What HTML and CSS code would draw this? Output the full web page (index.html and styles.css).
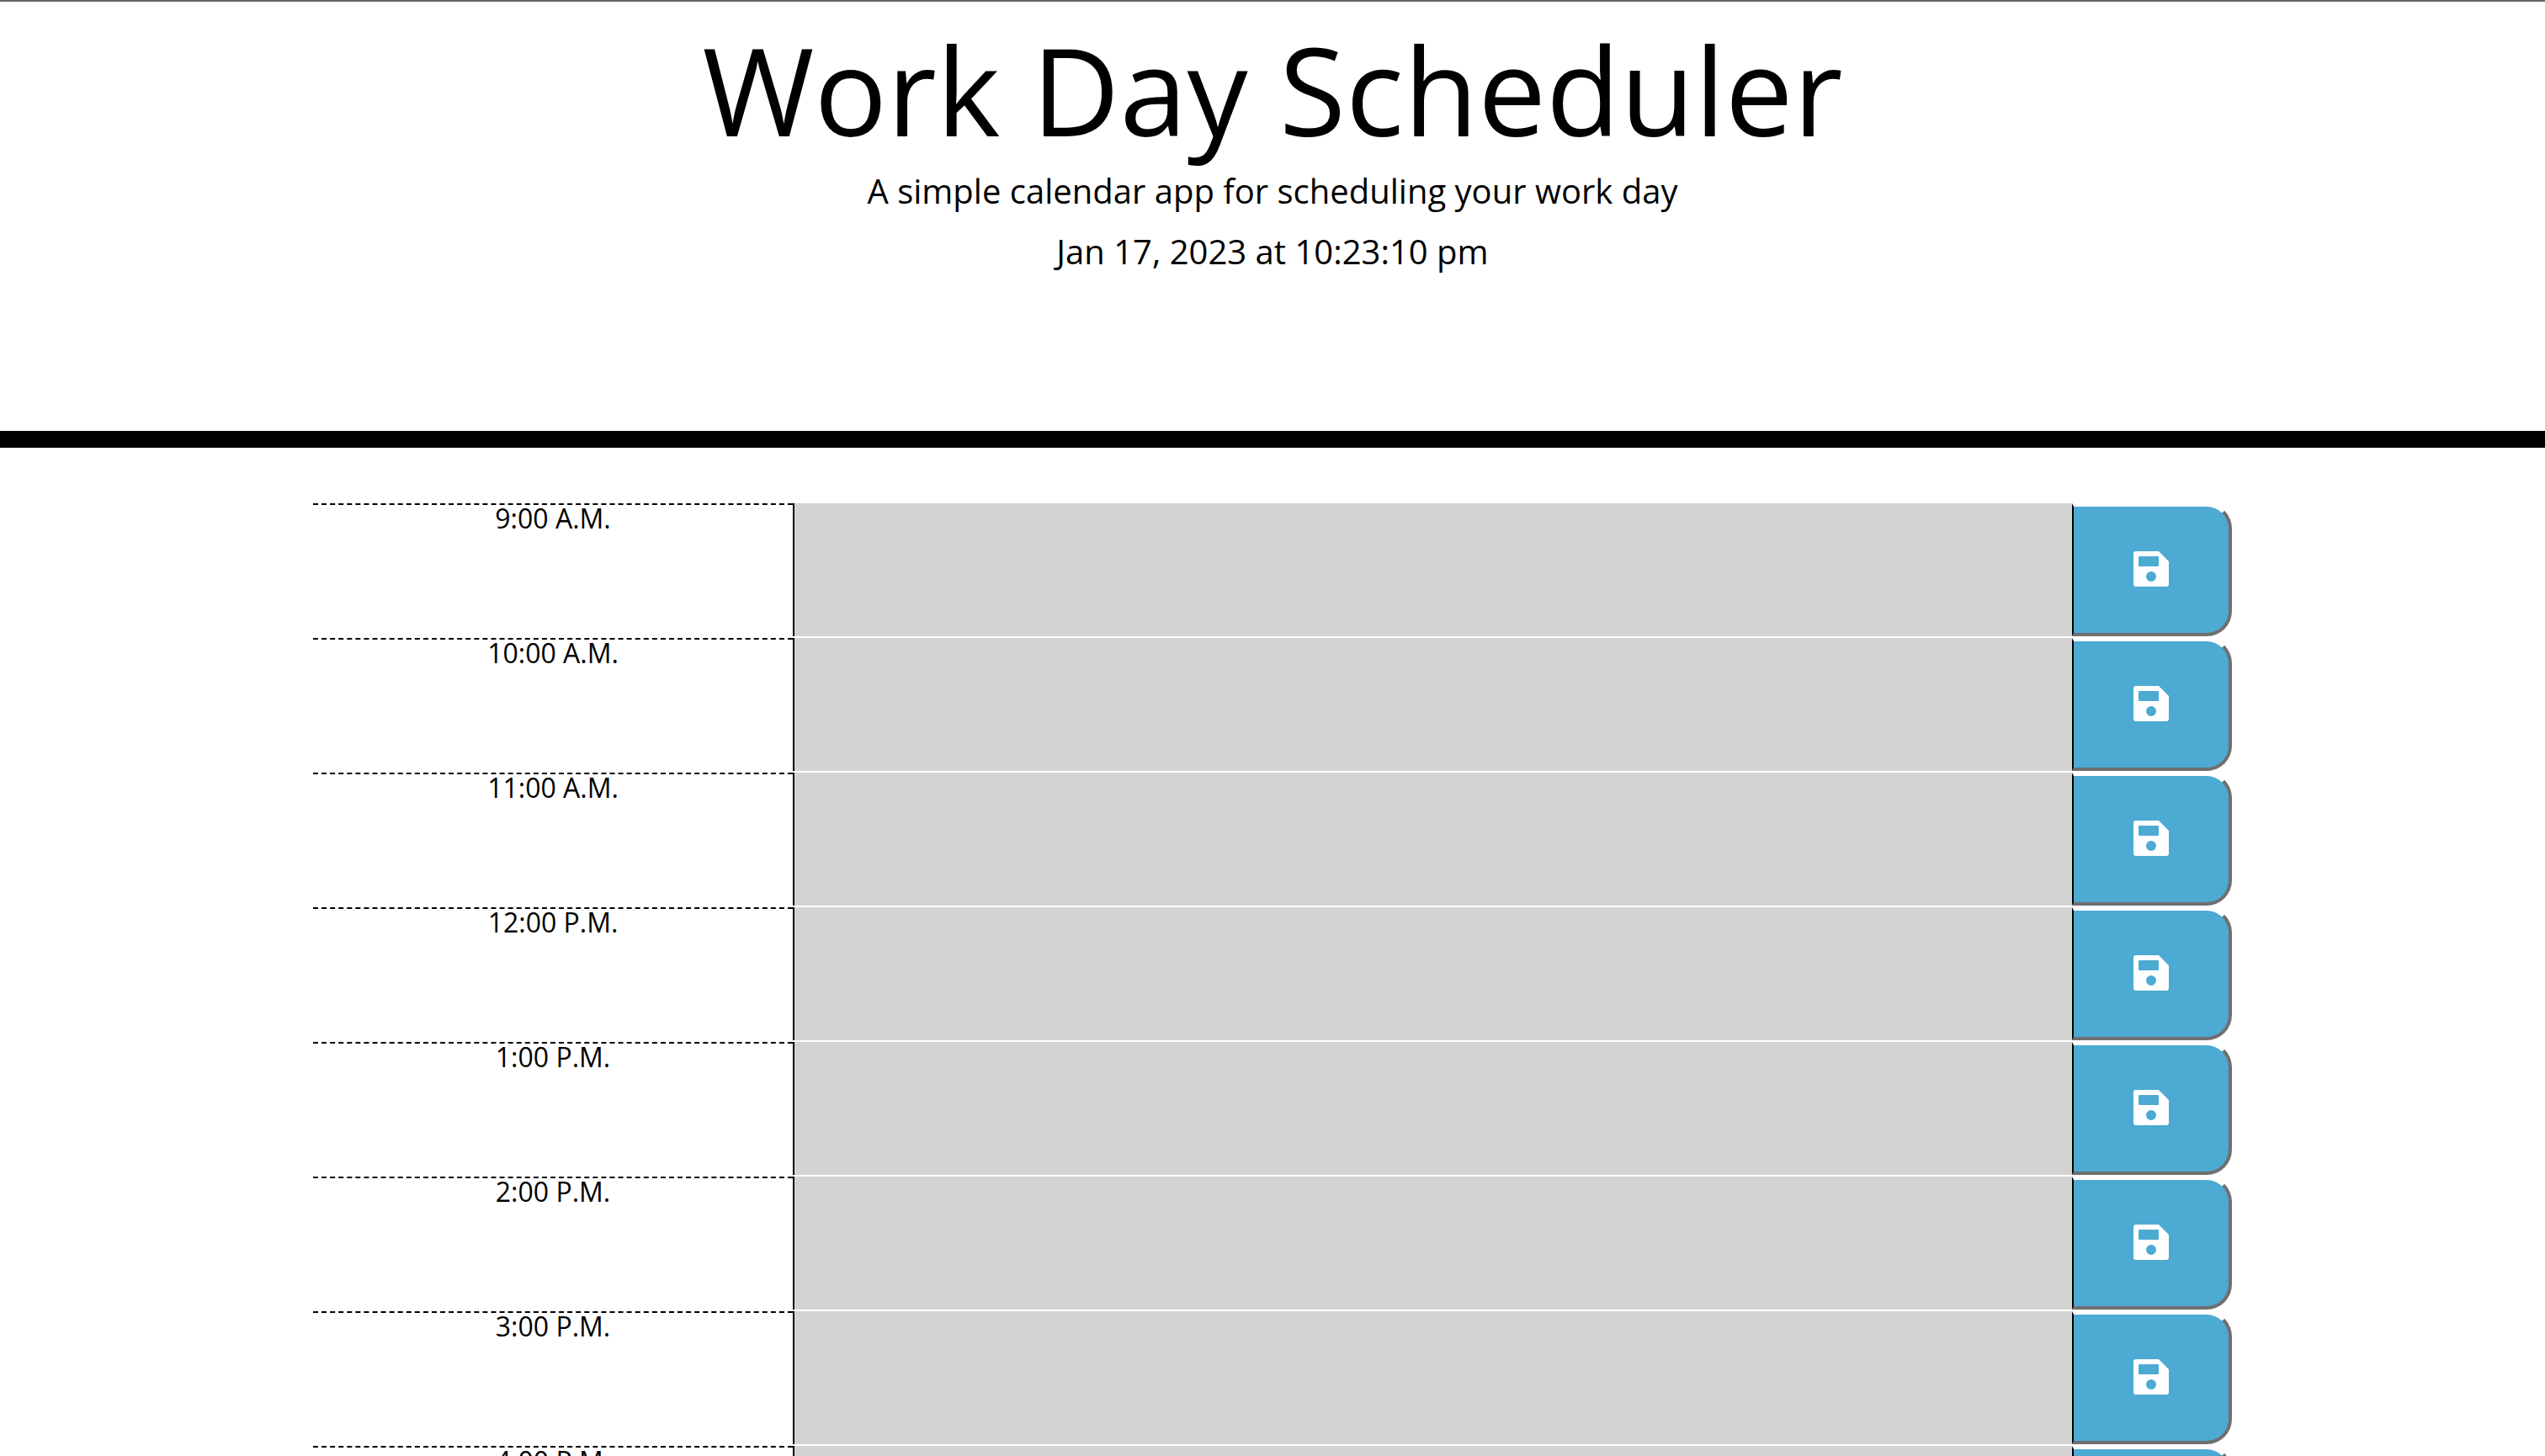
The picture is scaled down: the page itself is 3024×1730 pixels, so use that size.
FILE: index.html
```html
<!DOCTYPE html>
<html lang="en">
<head>
<meta charset="utf-8">
<title>Work Day Scheduler</title>
<link rel="stylesheet" href="styles.css">
</head>
<body>
<header class="hero">
  <h1 class="hero-title">Work Day Scheduler</h1>
  <p class="lead">A simple calendar app for scheduling your work day</p>
  <p class="lead">Jan 17, 2023 at 10:23:10 pm</p>
</header>
<main class="planner">
  <div class="row"><div class="hour">9:00 A.M.</div><textarea class="note"></textarea><button class="save" type="button"><svg class="save-icon" viewBox="0 0 42 42"><path fill-rule="evenodd" d="M3 0H30L42 12V39A3 3 0 0 1 39 42H3A3 3 0 0 1 0 39V3A3 3 0 0 1 3 0ZM7 6A1 1 0 0 0 6 7V17A1 1 0 0 0 7 18H29A1 1 0 0 0 30 17V7A1 1 0 0 0 29 6ZM21 24A6 6 0 1 0 21 36A6 6 0 1 0 21 24Z"/></svg></button></div>
  <div class="row"><div class="hour">10:00 A.M.</div><textarea class="note"></textarea><button class="save" type="button"><svg class="save-icon" viewBox="0 0 42 42"><path fill-rule="evenodd" d="M3 0H30L42 12V39A3 3 0 0 1 39 42H3A3 3 0 0 1 0 39V3A3 3 0 0 1 3 0ZM7 6A1 1 0 0 0 6 7V17A1 1 0 0 0 7 18H29A1 1 0 0 0 30 17V7A1 1 0 0 0 29 6ZM21 24A6 6 0 1 0 21 36A6 6 0 1 0 21 24Z"/></svg></button></div>
  <div class="row"><div class="hour">11:00 A.M.</div><textarea class="note"></textarea><button class="save" type="button"><svg class="save-icon" viewBox="0 0 42 42"><path fill-rule="evenodd" d="M3 0H30L42 12V39A3 3 0 0 1 39 42H3A3 3 0 0 1 0 39V3A3 3 0 0 1 3 0ZM7 6A1 1 0 0 0 6 7V17A1 1 0 0 0 7 18H29A1 1 0 0 0 30 17V7A1 1 0 0 0 29 6ZM21 24A6 6 0 1 0 21 36A6 6 0 1 0 21 24Z"/></svg></button></div>
  <div class="row"><div class="hour">12:00 P.M.</div><textarea class="note"></textarea><button class="save" type="button"><svg class="save-icon" viewBox="0 0 42 42"><path fill-rule="evenodd" d="M3 0H30L42 12V39A3 3 0 0 1 39 42H3A3 3 0 0 1 0 39V3A3 3 0 0 1 3 0ZM7 6A1 1 0 0 0 6 7V17A1 1 0 0 0 7 18H29A1 1 0 0 0 30 17V7A1 1 0 0 0 29 6ZM21 24A6 6 0 1 0 21 36A6 6 0 1 0 21 24Z"/></svg></button></div>
  <div class="row"><div class="hour">1:00 P.M.</div><textarea class="note"></textarea><button class="save" type="button"><svg class="save-icon" viewBox="0 0 42 42"><path fill-rule="evenodd" d="M3 0H30L42 12V39A3 3 0 0 1 39 42H3A3 3 0 0 1 0 39V3A3 3 0 0 1 3 0ZM7 6A1 1 0 0 0 6 7V17A1 1 0 0 0 7 18H29A1 1 0 0 0 30 17V7A1 1 0 0 0 29 6ZM21 24A6 6 0 1 0 21 36A6 6 0 1 0 21 24Z"/></svg></button></div>
  <div class="row"><div class="hour">2:00 P.M.</div><textarea class="note"></textarea><button class="save" type="button"><svg class="save-icon" viewBox="0 0 42 42"><path fill-rule="evenodd" d="M3 0H30L42 12V39A3 3 0 0 1 39 42H3A3 3 0 0 1 0 39V3A3 3 0 0 1 3 0ZM7 6A1 1 0 0 0 6 7V17A1 1 0 0 0 7 18H29A1 1 0 0 0 30 17V7A1 1 0 0 0 29 6ZM21 24A6 6 0 1 0 21 36A6 6 0 1 0 21 24Z"/></svg></button></div>
  <div class="row"><div class="hour">3:00 P.M.</div><textarea class="note"></textarea><button class="save" type="button"><svg class="save-icon" viewBox="0 0 42 42"><path fill-rule="evenodd" d="M3 0H30L42 12V39A3 3 0 0 1 39 42H3A3 3 0 0 1 0 39V3A3 3 0 0 1 3 0ZM7 6A1 1 0 0 0 6 7V17A1 1 0 0 0 7 18H29A1 1 0 0 0 30 17V7A1 1 0 0 0 29 6ZM21 24A6 6 0 1 0 21 36A6 6 0 1 0 21 24Z"/></svg></button></div>
  <div class="row"><div class="hour">4:00 P.M.</div><textarea class="note"></textarea><button class="save" type="button"><svg class="save-icon" viewBox="0 0 42 42"><path fill-rule="evenodd" d="M3 0H30L42 12V39A3 3 0 0 1 39 42H3A3 3 0 0 1 0 39V3A3 3 0 0 1 3 0ZM7 6A1 1 0 0 0 6 7V17A1 1 0 0 0 7 18H29A1 1 0 0 0 30 17V7A1 1 0 0 0 29 6ZM21 24A6 6 0 1 0 21 36A6 6 0 1 0 21 24Z"/></svg></button></div>
</main>
</body>
</html>
```
FILE: styles.css
```css
html {
  height: 100%;
  overflow: hidden;
}

body {
  margin: 0;
  background: #fff;
  color: #000;
  font-family: "Open Sans", sans-serif;
}

.hero {
  box-sizing: border-box;
  height: 532px;
  padding-top: 18px;
  border-top: 2px solid #666;
  border-bottom: 20px solid #000;
  text-align: center;
}

.hero-title {
  margin: 0 0 4px;
  font-size: 144px;
  font-weight: 400;
  line-height: 1.2;
}

.lead {
  margin: 0 0 12px;
  font-size: 40px;
  font-weight: 400;
  line-height: 60px;
}

.planner {
  box-sizing: border-box;
  width: 2280px;
  margin: 66px auto 0;
}

.row {
  display: grid;
  grid-template-columns: 3fr 8fr 1fr;
  height: 160px;
  align-items: start;
}

.hour {
  box-sizing: border-box;
  height: 158px;
  border-top: 2px dashed #000;
  font-size: 32px;
  line-height: 32px;
  text-align: center;
}

.note {
  display: block;
  box-sizing: border-box;
  width: 100%;
  height: 158px;
  margin: 0;
  padding: 0;
  border: none;
  border-left: 2px solid #000;
  border-radius: 0;
  background: #d3d3d3;
  outline: none;
  resize: none;
}

.save {
  display: flex;
  box-sizing: border-box;
  align-items: center;
  justify-content: center;
  height: 158px;
  margin: 0;
  padding: 0 0 2px;
  border-style: solid;
  border-width: 4px 4px 4px 2px;
  border-color: #fff #6f6f6f #6f6f6f #000;
  border-radius: 0 30px 30px 0;
  background: #4daad2;
}

.save-icon {
  display: block;
  width: 42px;
  height: 42px;
  fill: #fff;
}
```
